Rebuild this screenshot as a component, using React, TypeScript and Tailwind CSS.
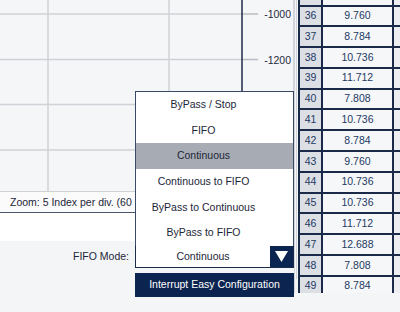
const rows: [number, string][] = [
  [35, "11.712"],
  [36, "9.760"],
  [37, "8.784"],
  [38, "10.736"],
  [39, "11.712"],
  [40, "7.808"],
  [41, "10.736"],
  [42, "8.784"],
  [43, "9.760"],
  [44, "10.736"],
  [45, "10.736"],
  [46, "11.712"],
  [47, "12.688"],
  [48, "7.808"],
  [49, "8.784"],
  [50, "9.760"],
]

const modes = [
  "ByPass / Stop",
  "FIFO",
  "Continuous",
  "Continuous to FIFO",
  "ByPass to Continuous",
  "ByPass to FIFO",
]

function Chart() {
  const hLines = [14, 59.5, 104.5, 150]
  return (
    <div className="h-[192px] border-r border-[#d3d5da] bg-[#f5f6f8]">
      <svg width="293" height="192" className="block">
        {[48, 169].map((x) => (
          <line key={x} x1={x} y1={0} x2={x} y2={192} stroke="#d0d2d7" strokeWidth={1.5} />
        ))}
        {hLines.map((y) => (
          <g key={y}>
            <line x1={0} y1={y} x2={242} y2={y} stroke="#d0d2d7" strokeWidth={1.5} />
            <line x1={242} y1={y} x2={258} y2={y} stroke="#b8bbc1" strokeWidth={1.5} />
          </g>
        ))}
        <line x1={0} y1={191.5} x2={293} y2={191.5} stroke="#cfd1d6" strokeWidth={1} />
        <line x1={242} y1={0} x2={242} y2={192} stroke="#1c2b48" strokeWidth={1.5} />
        {["-1000", "-1200"].map((t, i) => (
          <text
            key={t}
            x={291}
            y={hLines[i] + 4}
            textAnchor="end"
            fontSize="10.5"
            fill="#1e2a40"
            fontFamily="Liberation Sans, Arial, sans-serif"
          >
            {t}
          </text>
        ))}
      </svg>
    </div>
  )
}

export default function App() {
  return (
    <div className="flex h-[312px] w-[400px] overflow-hidden bg-[#f4f5f7] font-['Liberation_Sans',Arial,sans-serif] text-[10.5px] text-[#1c2638]">
      {/* left side: chart + controls */}
      <div className="relative flex w-[294px] flex-col">
        <Chart />
        <div className="flex h-[21px] items-center border-b border-[#4b566e] bg-[#fbfbfc] pt-[2px]">
          <div className="w-[135px] overflow-hidden whitespace-nowrap pl-[10px]">Zoom: 5 Index per div. (60</div>
        </div>
        <div className="h-[28px] bg-white" />

        <div className="flex flex-col pt-[4px]">
          <div className="flex h-[23px] items-center">
            <div className="w-[135px] pr-[6px] text-right">FIFO Mode:</div>
            <div className="relative flex h-[23px] w-[159px] border border-[#1d2c4a] bg-white">
              <div className="flex flex-1 items-center justify-center">Continuous</div>
              <div className="flex w-[23px] items-center justify-center bg-[#0c2450]">
                <svg width="13" height="11" viewBox="0 0 13 11">
                  <polygon points="0,0 13,0 6.5,11" fill="#ffffff" />
                </svg>
              </div>

              {/* open list */}
              <div className="absolute bottom-full left-[-1px] w-[159px] border border-b-0 border-[#3a4966] bg-white">
                {modes.map((m) => (
                  <div
                    key={m}
                    className={`flex h-[25.7px] items-center justify-center pr-[22px] ${
                      m === "Continuous" ? "bg-[#a7acb4]" : ""
                    }`}
                  >
                    {m}
                  </div>
                ))}
              </div>
            </div>
          </div>
          <div className="ml-[135px] mt-[5px] flex h-[24px] w-[159px] items-center justify-center bg-[#0c2450] text-white">
            Interrupt Easy Configuration
          </div>
        </div>
      </div>

      {/* right side: data table */}
      <div className="w-[106px]">
        <div className="h-[293px] overflow-hidden border-l border-[#d3d5da] pl-[1px]">
          <div className="h-full border-l border-[#d3d5da] pl-[1px]">
            <div className="mt-[-14.3px] flex flex-col gap-[2px] bg-[#1b2a48] pl-[2px] font-['Liberation_Sans_Narrow','Liberation_Sans',sans-serif] text-[10.5px] text-[#243a64]">
              {rows.map(([i, v]) => (
                <div key={i} className="flex h-[18.8px] gap-[2px]">
                  <div className="flex w-[21px] items-center justify-center bg-[#dcdfe4]">{i}</div>
                  <div className="flex w-[69px] items-center justify-center bg-[#f6f7f9]">{v}</div>
                  <div className="flex-1 bg-[#eceef1]" />
                </div>
              ))}
            </div>
          </div>
        </div>
      </div>
    </div>
  )
}
